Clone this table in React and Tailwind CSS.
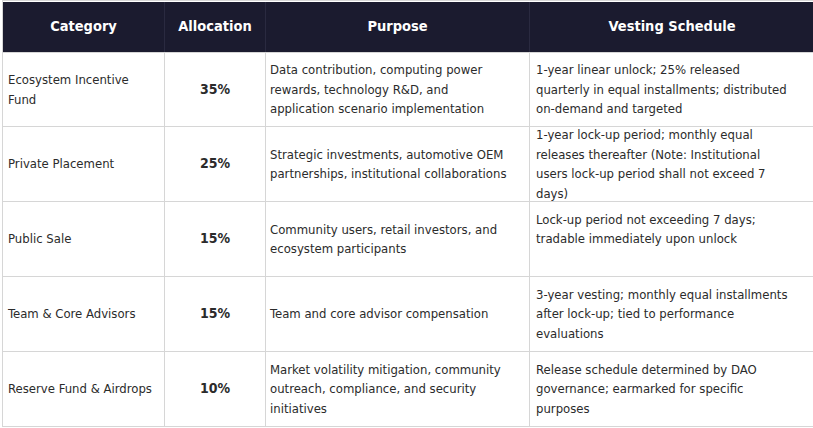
import React from 'react';

const rows = [
    {
        category: ['Ecosystem Incentive', 'Fund'],
        allocation: '35%',
        purpose: ['Data contribution, computing power', 'rewards, technology R&D, and', 'application scenario implementation'],
        vesting: ['1-year linear unlock; 25% released', 'quarterly in equal installments; distributed', 'on-demand and targeted']
    },
    {
        category: ['Private Placement'],
        allocation: '25%',
        purpose: ['Strategic investments, automotive OEM', 'partnerships, institutional collaborations'],
        vesting: ['1-year lock-up period; monthly equal', 'releases thereafter (Note: Institutional', 'users lock-up period shall not exceed 7', 'days)']
    },
    {
        category: ['Public Sale'],
        allocation: '15%',
        purpose: ['Community users, retail investors, and', 'ecosystem participants'],
        vesting: ['Lock-up period not exceeding 7 days;', 'tradable immediately upon unlock', '']
    },
    {
        category: ['Team & Core Advisors'],
        allocation: '15%',
        purpose: ['Team and core advisor compensation'],
        vesting: ['3-year vesting; monthly equal installments', 'after lock-up; tied to performance', 'evaluations']
    },
    {
        category: ['Reserve Fund & Airdrops'],
        allocation: '10%',
        purpose: ['Market volatility mitigation, community', 'outreach, compliance, and security', 'initiatives'],
        vesting: ['Release schedule determined by DAO', 'governance; earmarked for specific', 'purposes']
    }
];

const Lines = ({ lines }) => (
    <div>
        {lines.map((l, i) => (
            <div key={i} className="whitespace-nowrap h-[19.5px]">{l || '\u00a0'}</div>
        ))}
    </div>
);

const Cell = ({ children, className = '' }) => (
    <div className={`flex items-center border-r border-b border-[#d6d6d6] ${className}`}>
        {children}
    </div>
);

export default function App() {
    return (
        <div
            className="w-[813px] h-[428px] bg-white overflow-hidden pl-[2px]"
            style={{ fontFamily: '"DejaVu Sans Condensed", "DejaVu Sans", sans-serif' }}
        >
            <div className="border-t border-l border-[#d6d6d6] grid grid-cols-[162px_101px_264px_284px] text-[13px] leading-[19.5px] text-[#2b2b2b]">
                {['Category', 'Allocation', 'Purpose', 'Vesting Schedule'].map((h, i) => (
                    <div
                        key={h}
                        className={`h-[50px] mt-[1px] bg-[#1b1b2f] text-white font-bold text-[14.5px] flex items-center justify-center ${i < 3 ? 'border-r border-[#2a2a40]' : ''}`}
                    >
                        {h}
                    </div>
                ))}
                {rows.map((r, idx) => (
                    <React.Fragment key={idx}>
                        <Cell className={`h-[75px] pl-[5px] ${idx === 0 ? 'border-t' : ''}`}>
                            <Lines lines={r.category} />
                        </Cell>
                        <Cell className={`h-[75px] justify-center font-bold text-[14px] ${idx === 0 ? 'border-t' : ''}`}>
                            {r.allocation}
                        </Cell>
                        <Cell className={`h-[75px] pl-[4px] ${idx === 0 ? 'border-t' : ''}`}>
                            <Lines lines={r.purpose} />
                        </Cell>
                        <Cell className={`h-[75px] pl-[6px] border-r-0 ${idx === 0 ? 'border-t' : ''}`}>
                            <Lines lines={r.vesting} />
                        </Cell>
                    </React.Fragment>
                ))}
            </div>
        </div>
    );
}
